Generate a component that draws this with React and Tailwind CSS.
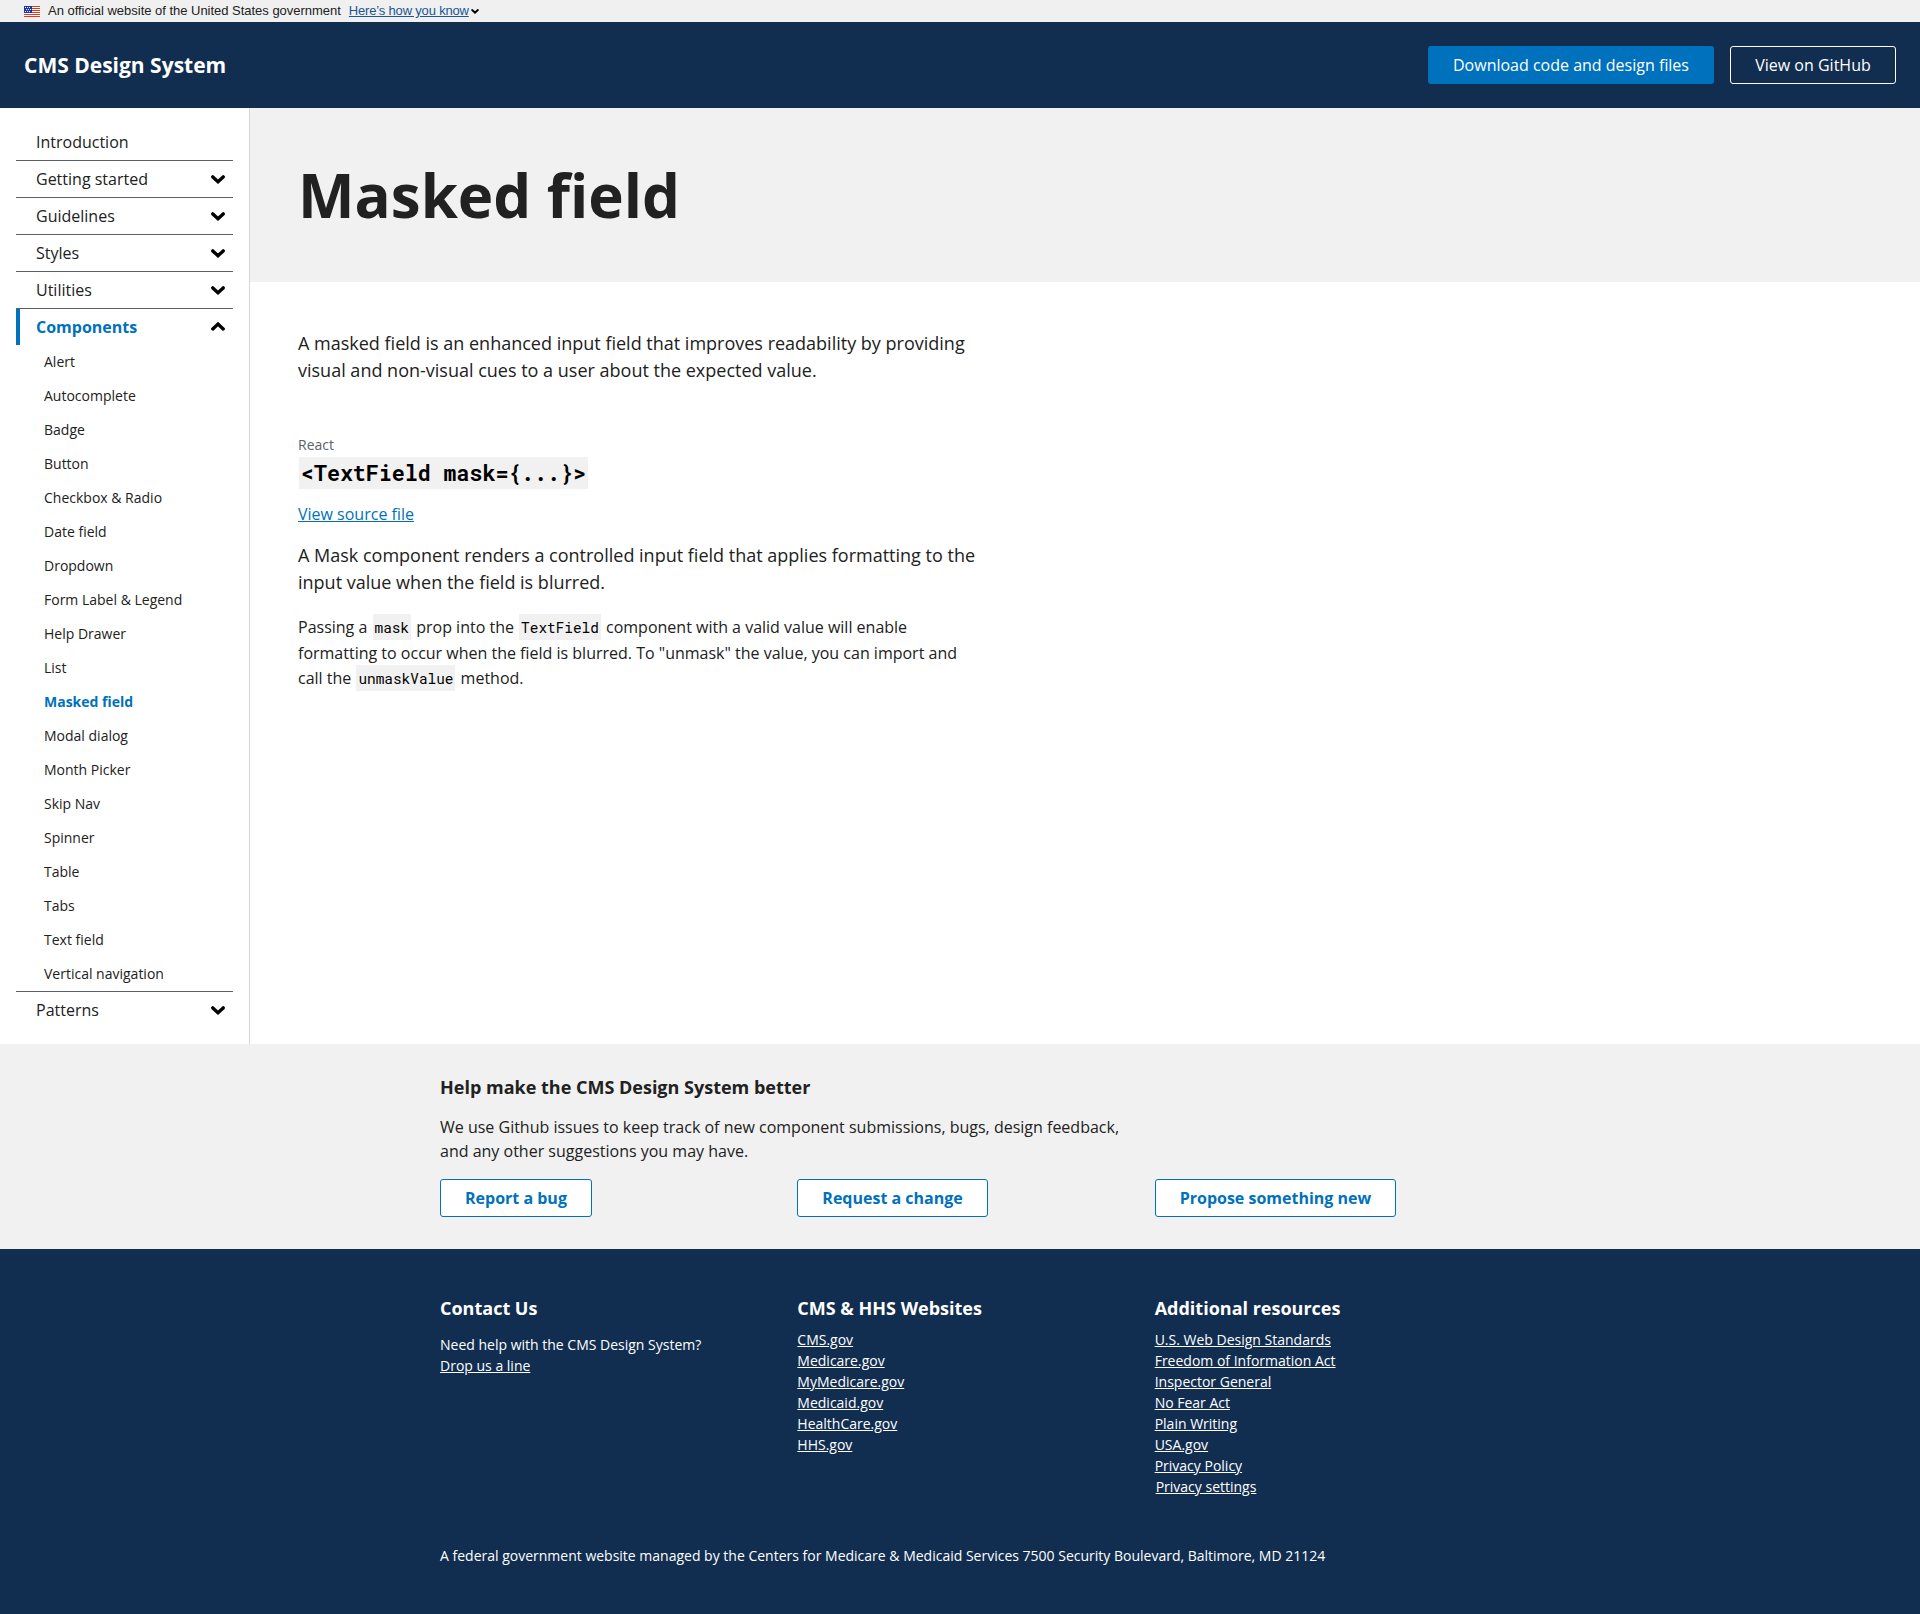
const CODE = 'bg-[#f1f1f1] text-black font-["Roboto_Mono","DejaVu_Sans_Mono",monospace]';

const COMPONENTS = [
  'Alert', 'Autocomplete', 'Badge', 'Button', 'Checkbox & Radio', 'Date field', 'Dropdown',
  'Form Label & Legend', 'Help Drawer', 'List', 'Masked field', 'Modal dialog', 'Month Picker',
  'Skip Nav', 'Spinner', 'Table', 'Tabs', 'Text field', 'Vertical navigation',
];

const CMS_SITES = ['CMS.gov', 'Medicare.gov', 'MyMedicare.gov', 'Medicaid.gov', 'HealthCare.gov', 'HHS.gov'];

const RESOURCES = [
  'U.S. Web Design Standards', 'Freedom of Information Act', 'Inspector General', 'No Fear Act',
  'Plain Writing', 'USA.gov', 'Privacy Policy',
];

function Chevron({ up = false, className = 'h-[9px] w-[14px]' }) {
  return (
    <svg viewBox="0 0 14 9" className={className} fill="none" stroke="#000" strokeWidth="3.4" strokeLinecap="round">
      <path d={up ? 'M1.8 6.9 7 2.1l5.2 4.8' : 'M1.8 1.9 7 6.7l5.2-4.8'} />
    </svg>
  );
}

function Flag() {
  return (
    <svg viewBox="0 0 16 11" className="h-[11px] w-4" shapeRendering="crispEdges">
      <rect width="16" height="11" fill="#fff" />
      {[0, 2, 4, 6, 8, 10].map((y) => (
        <rect key={y} y={y} width="16" height="1" fill="#e0391f" />
      ))}
      <rect width="8" height="7" fill="#1e33b1" />
      {[[1, 1], [3, 1], [5, 1], [2, 3], [4, 3], [6, 3], [1, 5], [3, 5], [5, 5]].map(([x, y]) => (
        <rect key={`${x}-${y}`} x={x} y={y} width="1" height="1" fill="#fff" />
      ))}
    </svg>
  );
}

function NavItem({ label, first = false, chevron = true }) {
  return (
    <div className={first ? '' : 'border-t border-[#5b616b]'}>
      <a className="flex h-9 items-center justify-between pl-5 pr-2 text-base">
        {label}
        {chevron && <Chevron />}
      </a>
    </div>
  );
}

function Sidebar() {
  return (
    <nav className="w-[250px] shrink-0 border-r border-[#d6d7d9] px-4 py-4">
      <NavItem label="Introduction" first chevron={false} />
      <NavItem label="Getting started" />
      <NavItem label="Guidelines" />
      <NavItem label="Styles" />
      <NavItem label="Utilities" />
      <div className="border-t border-[#5b616b]">
        <a className="flex h-9 items-center justify-between border-l-4 border-[#0071bc] pl-4 pr-2 text-base font-bold text-[#0071bc]">
          Components
          <Chevron up className="mb-0.5 h-[9px] w-[14px]" />
        </a>
        <ul>
          {COMPONENTS.map((name) => (
            <li
              key={name}
              className={
                name === 'Masked field'
                  ? 'flex h-[34px] items-center pl-7 text-sm font-bold text-[#0071bc]'
                  : 'flex h-[34px] items-center pl-7 text-sm'
              }
            >
              {name}
            </li>
          ))}
        </ul>
      </div>
      <NavItem label="Patterns" />
    </nav>
  );
}

function OutlineButton({ children }) {
  return (
    <div>
      <a className="inline-flex h-[38px] items-center rounded-[3px] border border-[#0071bc] bg-white px-6 text-base font-bold text-[#0071bc]">
        {children}
      </a>
    </div>
  );
}

export default function App() {
  return (
    <div className='min-h-[1614px] w-[1920px] bg-white font-["Open_Sans",sans-serif] text-[#212121]'>
      <div className='flex h-[22px] items-center bg-[#f0f0f0] pl-6 font-["Liberation_Sans",sans-serif] text-[13px]'>
        <Flag />
        <span className="ml-2 tracking-[-0.02px]">An official website of the United States government</span>
        <a className="ml-2 tracking-[-0.18px] text-[#205493] underline">Here’s how you know</a>
        <Chevron className="ml-0.5 h-[5px] w-2" />
      </div>

      <header className="flex h-[86px] items-center justify-between bg-[#112e51] px-6 text-white">
        <div className="pt-0.5 text-[21px] font-bold">CMS Design System</div>
        <div className="flex gap-4">
          <a className="flex h-[38px] w-[286px] items-center justify-center rounded-[3px] bg-[#0071bc]">Download code and design files</a>
          <a className="flex h-[38px] w-[166px] items-center justify-center rounded-[3px] border border-white">View on GitHub</a>
        </div>
      </header>

      <div className="flex h-[936px]">
        <Sidebar />
        <main className="grow">
          <div className="flex h-[174px] items-center bg-[#f1f1f1] pl-12">
            <h1 className="text-[60px] leading-[78px] font-bold">Masked field</h1>
          </div>
          <div className="w-[780px] pl-12 pt-12">
            <p className="text-lg leading-[27px]">
              A masked field is an enhanced input field that improves readability by providing<br />
              visual and non-visual cues to a user about the expected value.
            </p>
            <div className="mt-[50px] text-sm leading-[21px] text-[#5b616b]">React</div>
            <h3 className="mt-0.5 flex pl-px">
              <code className={`${CODE} h-8 px-0.5 text-[21.6px] leading-8 font-bold`}>{'<TextField mask={...}>'}</code>
            </h3>
            <div className="mt-[13px] leading-6"><a className="text-[#0071bc] underline">View source file</a></div>
            <p className="mt-4 text-lg leading-[27px]">
              A Mask component renders a controlled input field that applies formatting to the<br />
              input value when the field is blurred.
            </p>
            <p className="mt-[19px] text-base leading-[25.5px]">
              Passing a <code className={`${CODE} mx-px px-0.5 pt-1 pb-[3px] text-[14.4px]`}>mask</code> prop into the{' '}
              <code className={`${CODE} mx-px px-0.5 pt-1 pb-[3px] text-[14.4px]`}>TextField</code> component with a valid value will enable<br />
              formatting to occur when the field is blurred. To "unmask" the value, you can import and<br />
              call the <code className={`${CODE} mx-px px-0.5 pt-1 pb-[3px] text-[14.4px]`}>unmaskValue</code> method.
            </p>
          </div>
        </main>
      </div>

      <section className="h-[205px] bg-[#f1f1f1] pl-[440px] pt-[30px]">
        <h2 className="text-lg leading-[27px] font-bold">Help make the CMS Design System better</h2>
        <p className="mt-[14px] text-base leading-6">
          We use Github issues to keep track of new component submissions, bugs, design feedback,<br />
          and any other suggestions you may have.
        </p>
        <div className="mt-4 grid w-[1072px] grid-cols-3">
          <OutlineButton>Report a bug</OutlineButton>
          <OutlineButton>Request a change</OutlineButton>
          <OutlineButton>Propose something new</OutlineButton>
        </div>
      </section>

      <footer className="h-[365px] bg-[#112e51] pl-[440px] pt-[46px] text-sm leading-[21px] text-white">
        <div className="grid h-[250px] w-[1072px] grid-cols-3">
          <div>
            <h2 className="text-lg leading-[27px] font-bold">Contact Us</h2>
            <p className="mt-3">
              Need help with the CMS Design System?<br />
              <a className="underline">Drop us a line</a>
            </p>
          </div>
          <div>
            <h2 className="text-lg leading-[27px] font-bold">CMS &amp; HHS Websites</h2>
            <ul className="mt-[7px]">
              {CMS_SITES.map((s) => <li key={s}><a className="underline">{s}</a></li>)}
            </ul>
          </div>
          <div>
            <h2 className="text-lg leading-[27px] font-bold">Additional resources</h2>
            <ul className="mt-[7px]">
              {RESOURCES.map((s) => <li key={s}><a className="underline">{s}</a></li>)}
              <li className="pl-px"><a className="underline">Privacy settings</a></li>
            </ul>
          </div>
        </div>
        <p>A federal government website managed by the Centers for Medicare &amp; Medicaid Services 7500 Security Boulevard, Baltimore, MD 21124</p>
      </footer>
    </div>
  );
}
